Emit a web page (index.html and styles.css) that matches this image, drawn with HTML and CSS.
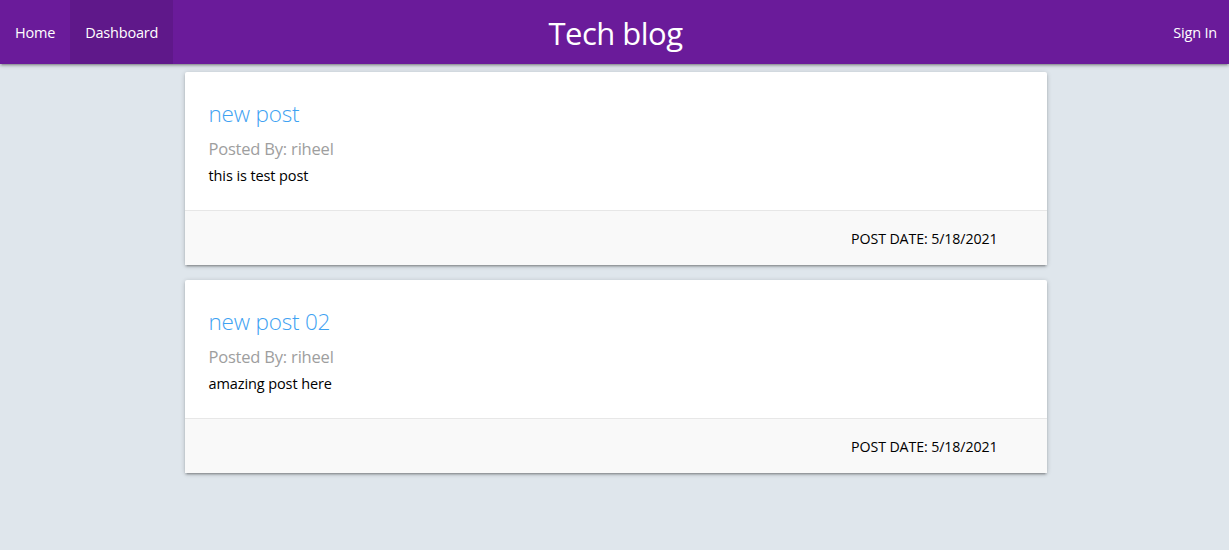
FILE: index.html
```html
<!DOCTYPE html>
<html lang="en">
<head>
<meta charset="utf-8">
<title>Tech blog</title>
<link rel="stylesheet" href="styles.css">
</head>
<body>
<nav class="navbar">
  <ul class="nav-left">
    <li><a href="#" class="nav-link">Home</a></li>
    <li><a href="#" class="nav-link active">Dashboard</a></li>
  </ul>
  <a href="#" class="brand">Tech blog</a>
  <ul class="nav-right">
    <li><a href="#" class="nav-link">Sign In</a></li>
  </ul>
</nav>
<main class="container">
  <article class="card">
    <div class="card-content">
      <span class="card-title">new post</span>
      <h5 class="author">Posted By: riheel</h5>
      <p class="body">this is test post</p>
    </div>
    <div class="card-action">POST DATE: 5/18/2021</div>
  </article>
  <article class="card">
    <div class="card-content">
      <span class="card-title">new post 02</span>
      <h5 class="author">Posted By: riheel</h5>
      <p class="body">amazing post here</p>
    </div>
    <div class="card-action">POST DATE: 5/18/2021</div>
  </article>
</main>
</body>
</html>
```
FILE: styles.css
```css
* { box-sizing: border-box; }
html, body {
  margin: 0;
  padding: 0;
}
body {
  background: #dfe6ec;
  font-family: "Open Sans", "Noto Sans", sans-serif;
  color: #000;
}
.navbar {
  position: relative;
  height: 64px;
  background: #6a1b9a;
  display: flex;
  align-items: stretch;
  justify-content: space-between;
  box-shadow: 0 2px 2px 0 rgba(0,0,0,0.14), 0 3px 1px -2px rgba(0,0,0,0.12), 0 1px 5px 0 rgba(0,0,0,0.2);
  z-index: 2;
}
.nav-left, .nav-right {
  list-style: none;
  margin: 0;
  padding: 0;
  display: flex;
}
.nav-link {
  display: flex;
  align-items: center;
  height: 64px;
  padding: 0 15px;
  color: #fff;
  text-decoration: none;
  font-size: 14.5px;
  letter-spacing: -0.2px;
}
.nav-right .nav-link {
  padding-right: 12px;
}
.nav-link.active {
  background: rgba(0,0,0,0.1);
}
.brand {
  position: absolute;
  left: 50%;
  top: 0;
  transform: translateX(-50%);
  line-height: 66px;
  color: #fff;
  text-decoration: none;
  font-size: 31px;
  letter-spacing: -0.5px;
  margin-left: 1px;
}
.container {
  width: 862px;
  margin: 0 auto;
  padding-top: 8px;
  position: relative;
  left: 1px;
}
.card {
  background: #fff;
  border-radius: 2px;
  margin: 0 0 15px;
  box-shadow: 0 2px 2px 0 rgba(0,0,0,0.14), 0 3px 1px -2px rgba(0,0,0,0.12), 0 1px 5px 0 rgba(0,0,0,0.2);
}
.card-content {
  padding: 26px 24px 24px;
  height: 138px;
}
.card-title {
  display: block;
  font-size: 22.5px;
  font-weight: 300;
  line-height: 32px;
  color: #3ea2f2;
  letter-spacing: -0.2px;
}
.author {
  margin: 7px 0 0;
  font-size: 16.5px;
  font-weight: 400;
  line-height: 24px;
  color: #9e9e9e;
  letter-spacing: -0.2px;
}
.body {
  margin: 5px 0 0;
  font-size: 14.5px;
  line-height: 20px;
  letter-spacing: -0.1px;
}
.card-action {
  border-top: 1px solid rgba(160,160,160,0.2);
  background: #f9f9f9;
  height: 55px;
  padding: 0 49px 0 24px;
  display: flex;
  align-items: center;
  justify-content: flex-end;
  font-size: 14.2px;
  letter-spacing: -0.1px;
  color: #000;
}
```
